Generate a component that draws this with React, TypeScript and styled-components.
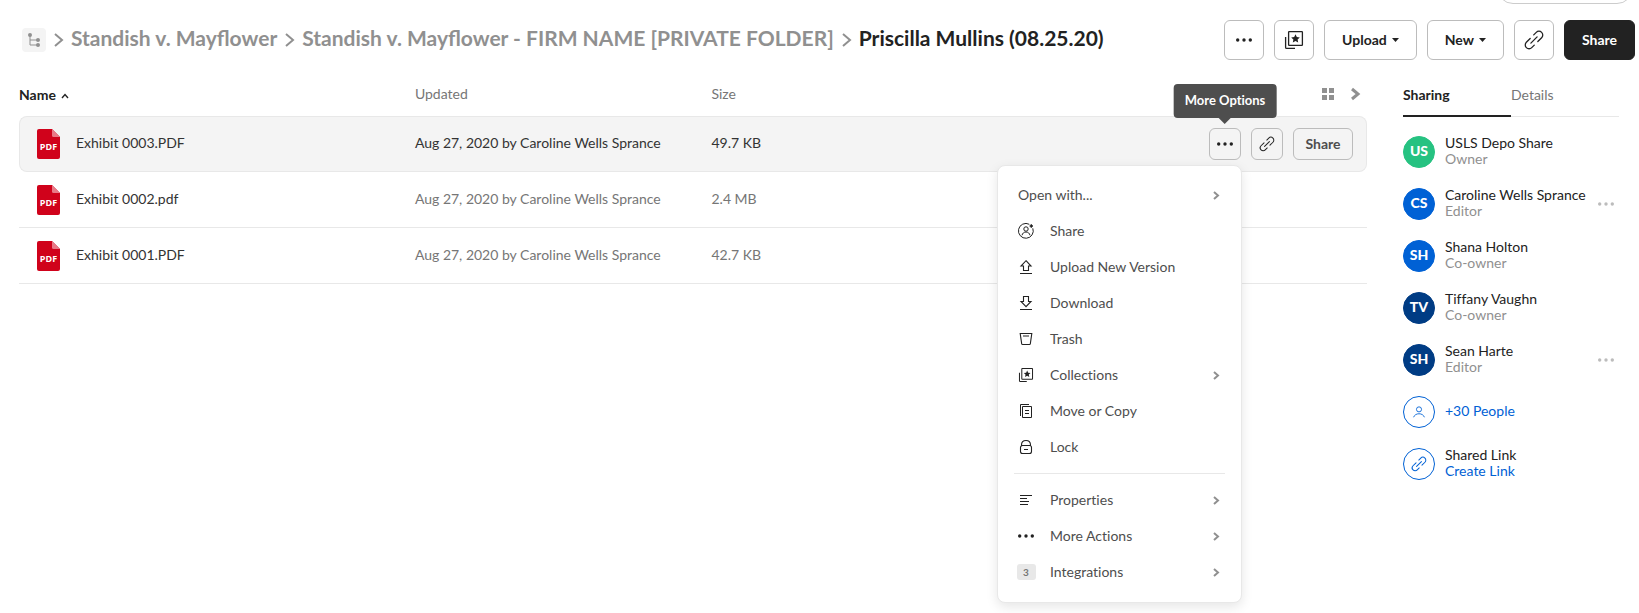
import React from 'react';
import styled, { createGlobalStyle, css } from 'styled-components';

const GlobalStyle = createGlobalStyle`
  * { box-sizing: border-box; }
  body { margin: 0; background: #fff; font-variant-ligatures: none; }
  body, button { font-family: Lato, "Liberation Sans", sans-serif; font-size: 14px; line-height: 20px; color: #222; }
  button { cursor: pointer; font-variant-ligatures: none; }
  svg { display: block; flex: none; overflow: visible; }
`;

/* ---------- icons ---------- */

const Svg = ({ size = 16, box = 16, children }: { size?: number; box?: number; children: React.ReactNode }) => (
  <svg width={size} height={size} viewBox={`0 0 ${box} ${box}`} fill="none" stroke="currentColor" aria-hidden="true">
    {children}
  </svg>
);

const DotsIcon = () => (
  <Svg>
    <g fill="currentColor" stroke="none">
      <circle cx="1.7" cy="8" r="1.7" />
      <circle cx="8" cy="8" r="1.7" />
      <circle cx="14.3" cy="8" r="1.7" />
    </g>
  </Svg>
);

const LinkIcon = ({ size = 18 }: { size?: number }) => (
  <Svg size={size} box={18}>
    <g transform="rotate(-45 9 9)" strokeWidth="1.3" strokeLinecap="round">
      <path d="M7.4 5.2H2a3.8 3.8 0 0 0 0 7.6h3.600M10.600 12.800H16a3.800 3.800 0 0 0 0-7.600h-3.600M4.600 9h8.800" />
    </g>
  </Svg>
);

const CollectionIcon = ({ size = 18 }: { size?: number }) => (
  <Svg size={size} box={18}>
    <rect x="3.600" y=".600" width="13.800" height="13.800" rx=".600" strokeWidth="1.300" />
    <path d="M.600 6v10.400c0 .600.400 1 1 1H10" strokeWidth="1.300" />
    <path d="M10.500 3.200l1.300 2.800 3 .400-2.200 2.100.600 3-2.700-1.500-2.700 1.500.600-3-2.200-2.100 3-.400z" fill="currentColor" stroke="none" />
  </Svg>
);

const TreeIcon = () => (
  <svg width="12" height="14" viewBox="0 0 12 14" fill="none" stroke="currentColor" aria-hidden="true">
    <path d="M2 2v10h8M2 7h8" />
    <g fill="currentColor" stroke="none">
      <circle cx="2" cy="2" r="2" />
      <circle cx="10" cy="7" r="2" />
      <circle cx="10" cy="12" r="2" />
    </g>
  </svg>
);

const Chevron = ({ w = 6, h = 9, stroke = 2 }: { w?: number; h?: number; stroke?: number }) => (
  <svg width={w} height={h} viewBox={`0 0 ${w} ${h}`} fill="none" stroke="currentColor" strokeWidth={stroke} aria-hidden="true">
    <path d={`M1 1L${w - 1} ${h / 2}L1 ${h - 1}`} />
  </svg>
);

const Caret = () => (
  <svg width="7" height="4" viewBox="0 0 7 4" fill="currentColor" aria-hidden="true"><path d="M0 0h7L3.5 4z" /></svg>
);

const SortIcon = () => (
  <svg width="8" height="6" viewBox="0 0 8 6" fill="none" stroke="currentColor" strokeWidth="1.4" aria-hidden="true">
    <path d="M1 6l3-3.400L7 6" />
  </svg>
);

const GridIcon = () => (
  <svg width="12" height="12" viewBox="0 0 12 12" fill="currentColor" aria-hidden="true">
    <path d="M0 0h5v5H0zM7 0h5v5H7zM0 7h5v5H0zM7 7h5v5H7z" />
  </svg>
);

const PdfIcon = () => (
  <svg width="23" height="30" viewBox="0 0 23 30" role="img" aria-label="PDF file">
    <path d="M2 0h13l8 8v20a2 2 0 0 1-2 2H2a2 2 0 0 1-2-2V2a2 2 0 0 1 2-2z" fill="#d0021b" />
    <path d="M15 0l8 8h-6.500A1.500 1.500 0 0 1 15 6.500z" fill="#e87a87" />
    <text x="11.500" y="21" textAnchor="middle" fill="#fff" fontFamily="Open Sans, sans-serif" fontWeight="700" fontSize="9">PDF</text>
  </svg>
);

const ShareIcon = () => (
  <Svg>
    <path d="M11.300 1.300A7.400 7.400 0 1 0 14.800 5.300" />
    <circle cx="8" cy="6" r="2.200" />
    <path d="M4 12.300c.400-2 2-3.300 4-3.300s3.600 1.300 4 3.300" />
    <path d="M13.300 1.300v3.400M11.600 3h3.400" strokeWidth="1.400" />
  </Svg>
);
const UploadIcon = () => (
  <Svg><path d="M8 1.700L13 7h-2.500v4.500h-5V7H3zM2 14.500h12" strokeWidth="1.100" /></Svg>
);
const DownloadIcon = () => (
  <Svg><path d="M8 11.700L3 6.500h2.500v-5h5v5H13zM2 14.500h12" strokeWidth="1.100" /></Svg>
);
const TrashIcon = () => (
  <Svg><path d="M2.200 2.500h11.600l-1.500 10.300c-.100.500-.400.700-.900.700H4.600c-.500 0-.800-.200-.900-.700zM5 5h6" strokeWidth="1.100" /></Svg>
);
const CopyIcon = () => (
  <Svg><path d="M4.500 3.500h9v11h-9zM2.500 13V1.500H11M7 7.500h4M7 10.500h4" /></Svg>
);
const LockIcon = () => (
  <Svg><path d="M4.500 6.500h7a2 2 0 0 1 2 2v4a2 2 0 0 1-2 2h-7a2 2 0 0 1-2-2v-4a2 2 0 0 1 2-2zM3.500 6.700V6C3.500 3.300 5.300 1.500 8 1.500S12.500 3.300 12.500 6v.700M6 10.500h4" strokeWidth="1.100" /></Svg>
);
const PropertiesIcon = () => (
  <Svg><path d="M2 3.500h12M2 6.500h7M2 9.500h9M2 12.500h8" strokeWidth="1.100" /></Svg>
);
const PersonIcon = () => (
  <Svg size={14}><circle cx="8" cy="5" r="2.900" /><path d="M1.800 14C2.800 11.400 5.100 10 8 10s5.200 1.400 6.200 4" /></Svg>
);

/* ---------- header ---------- */

const Page = styled.div`
  min-height: 100vh;
`;
const TopStrip = styled.div`
  display: flex;
  justify-content: flex-end;
  align-items: flex-end;
  height: 4px;
  padding-right: 6px;
  overflow: hidden;
`;
const AccountPill = styled.div`
  flex: none;
  width: 136px;
  height: 32px;
  border: 1px solid #ccc;
  border-radius: 16px;
`;
const Header = styled.header`
  display: flex;
  align-items: center;
  justify-content: space-between;
  padding: 16px 4px 16px 22px;
`;
const Breadcrumbs = styled.nav`
  display: flex;
  align-items: center;
  gap: 8px;
  color: #909090;
  white-space: nowrap;
`;
const RootButton = styled.button`
  display: grid;
  place-items: center;
  width: 24px;
  height: 24px;
  padding: 0;
  border: 0;
  border-radius: 4px;
  background: #f4f4f4;
  color: #909090;
`;
const Crumb = styled.a<{ $current?: boolean }>`
  padding-bottom: 4px;
  font-size: 21px;
  line-height: 24px;
  font-weight: 700;
  font-variant-ligatures: normal;
  text-decoration: none;
  color: ${p => (p.$current ? '#222' : '#909090')};
`;
const Actions = styled.div`
  display: flex;
  gap: 10px;
`;
const buttonBase = css`
  display: inline-flex;
  align-items: center;
  justify-content: center;
  gap: 5px;
  background: #fff;
  border: 1px solid #bcbcbc;
  font-weight: 700;
  white-space: nowrap;
`;
const ToolButton = styled.button<{ $primary?: boolean; $icon?: boolean }>`
  ${buttonBase}
  height: 40px;
  min-width: 40px;
  padding: 0 ${p => (p.$icon ? 0 : 17)}px;
  border-radius: 6px;
  ${p => p.$primary && css`background: #222; border-color: #222; color: #fff;`}
`;

/* ---------- body ---------- */

const Body = styled.div`
  display: flex;
  align-items: flex-start;
  gap: 36px;
  padding: 0 20px 0 19px;
`;
const Files = styled.main`
  flex: 1;
  min-width: 0;
`;
const Table = styled.table`
  width: 100%;
  table-layout: fixed;
  border-collapse: separate;
  border-spacing: 0;
`;
const HeadCell = styled.th<{ $sorted?: boolean; $width?: string }>`
  width: ${p => p.$width || 'auto'};
  height: 40px;
  padding: ${p => (p.$sorted ? '0 0 2px 0' : '0 0 4px 5px')};
  text-align: left;
  font-weight: ${p => (p.$sorted ? 700 : 400)};
  color: ${p => (p.$sorted ? '#222' : '#767676')};
`;
const SortButton = styled.button`
  display: flex;
  align-items: center;
  gap: 5px;
  padding: 0;
  border: 0;
  background: none;
  font-weight: 700;
`;
const ViewControls = styled.div`
  display: flex;
  justify-content: flex-end;
  align-items: center;
  gap: 17px;
  padding-right: 8px;
`;
const PlainButton = styled.button`
  display: flex;
  padding: 0;
  border: 0;
  background: none;
  color: #909090;
`;
const Cell = styled.td<{ $active?: boolean; $muted?: boolean }>`
  height: 56px;
  padding: 0 0 0 5px;
  white-space: nowrap;
  color: ${p => (p.$muted ? '#767676' : '#333')};
  border: 0 solid #e8e8e8;
  border-bottom-width: 1px;
  &:first-child { padding-left: 18px; }
  ${p => p.$active && css`
    background: #f4f4f4;
    border-top-width: 1px;
    &:first-child { border-left-width: 1px; padding-left: 17px; border-radius: 8px 0 0 8px; }
    &:last-child { border-right-width: 1px; border-radius: 0 8px 8px 0; }
  `}
`;
const CellText = styled.span`
  display: block;
  padding-bottom: 2px;
`;
const FileName = styled.div`
  display: flex;
  align-items: center;
  gap: 16px;
`;
const RowActions = styled.div`
  display: flex;
  justify-content: flex-end;
  gap: 10px;
  padding-right: 13px;
`;
const RowButton = styled.button<{ $text?: boolean }>`
  ${buttonBase}
  height: 32px;
  width: ${p => (p.$text ? 60 : 32)}px;
  padding: 0;
  border-radius: 6px;
  background: #f4f4f4;
  color: ${p => (p.$text ? '#4e4e4e' : '#222')};
`;
const MenuAnchor = styled.div`
  position: relative;
  display: flex;
`;
const Tooltip = styled.div`
  position: absolute;
  bottom: 42px;
  left: 50%;
  transform: translateX(-50%);
  padding: 6px 11px 8px;
  border-radius: 4px;
  background: #4e4e4e;
  color: #fff;
  font-size: 13px;
  font-weight: 700;
  white-space: nowrap;
  &::after {
    content: '';
    position: absolute;
    top: 100%;
    left: 50%;
    margin-left: -6px;
    border: 6px solid transparent;
    border-bottom: 0;
    border-top-color: #4e4e4e;
  }
`;
const Menu = styled.div`
  position: absolute;
  z-index: 2;
  top: 37px;
  right: -1px;
  width: 245px;
  padding: 11px 16px 12px;
  border: 1px solid #e8e8e8;
  border-radius: 8px;
  background: #fff;
  box-shadow: 0 4px 12px rgba(0, 0, 0, 0.1);
`;
const MenuItem = styled.button`
  display: flex;
  align-items: center;
  width: 100%;
  height: 36px;
  padding: 0 6px 0 4px;
  border: 0;
  background: none;
  text-align: left;
  color: #4e4e4e;
`;
const MenuIcon = styled.span`
  display: flex;
  justify-content: center;
  width: 16px;
  margin-right: 16px;
  color: #222;
`;
const MenuLabel = styled.span`
  flex: 1;
`;
const MenuArrow = styled.span`
  color: #909090;
`;
const MenuDivider = styled.hr`
  height: 1px;
  margin: 8px 0;
  border: 0;
  background: #e8e8e8;
`;
const CountBadge = styled.span`
  flex: none;
  width: 19px;
  border-radius: 3px;
  background: #e8e8e8;
  color: #767676;
  font-size: 10px;
  line-height: 16px;
  font-weight: 700;
  text-align: center;
`;

/* ---------- sidebar ---------- */

const Sidebar = styled.aside`
  flex: none;
  width: 216px;
`;
const Tabs = styled.div`
  display: flex;
  height: 41px;
  margin-bottom: 19px;
  border-bottom: 1px solid #e8e8e8;
`;
const Tab = styled.button<{ $active?: boolean }>`
  flex: 1;
  height: 41px;
  padding: 0 0 2px;
  border: 0;
  border-bottom: 2px solid ${p => (p.$active ? '#222' : 'transparent')};
  background: none;
  text-align: left;
  font-weight: ${p => (p.$active ? 700 : 400)};
  color: ${p => (p.$active ? '#222' : '#767676')};
`;
const People = styled.ul`
  display: grid;
  gap: 20px;
  margin: 0;
  padding: 0;
  list-style: none;
`;
const Person = styled.li`
  display: flex;
  align-items: center;
  height: 32px;
`;
const Avatar = styled.span<{ $color?: string }>`
  flex: none;
  display: grid;
  place-items: center;
  width: 32px;
  height: 32px;
  margin-right: 10px;
  padding-bottom: ${p => (p.$color ? 2 : 0)}px;
  border-radius: 50%;
  border: 1px solid ${p => p.$color || '#0061d5'};
  background: ${p => p.$color || '#fff'};
  color: ${p => (p.$color ? '#fff' : '#0061d5')};
  font-weight: 900;
`;
const PersonText = styled.div`
  flex: 1;
  line-height: 16px;
  padding-bottom: 2px;
  white-space: nowrap;
`;
const Role = styled.div`
  color: #909090;
`;
const TextLink = styled.a`
  display: block;
  color: #0061d5;
  text-decoration: none;
`;
const PersonMenu = styled(PlainButton)`
  margin-right: 5px;
  color: #bcbcbc;
`;

/* ---------- data ---------- */

const files = [
  { name: 'Exhibit 0003.PDF', size: '49.7 KB', active: true },
  { name: 'Exhibit 0002.pdf', size: '2.4 MB' },
  { name: 'Exhibit 0001.PDF', size: '42.7 KB' },
];
const menuTop = [
  { label: 'Share', icon: <ShareIcon /> },
  { label: 'Upload New Version', icon: <UploadIcon /> },
  { label: 'Download', icon: <DownloadIcon /> },
  { label: 'Trash', icon: <TrashIcon /> },
  { label: 'Collections', icon: <CollectionIcon size={14} />, arrow: true },
  { label: 'Move or Copy', icon: <CopyIcon /> },
  { label: 'Lock', icon: <LockIcon /> },
];
const menuBottom = [
  { label: 'Properties', icon: <PropertiesIcon />, arrow: true },
  { label: 'More Actions', icon: <DotsIcon />, arrow: true },
  { label: 'Integrations', icon: <CountBadge>3</CountBadge>, arrow: true },
];
const people = [
  { initials: 'US', name: 'USLS Depo Share', role: 'Owner', color: '#26c281' },
  { initials: 'CS', name: 'Caroline Wells Sprance', role: 'Editor', color: '#0061d5', menu: true },
  { initials: 'SH', name: 'Shana Holton', role: 'Co-owner', color: '#0061d5' },
  { initials: 'TV', name: 'Tiffany Vaughn', role: 'Co-owner', color: '#003c84' },
  { initials: 'SH', name: 'Sean Harte', role: 'Editor', color: '#003c84', menu: true },
];

const Item = ({ label, icon, arrow }: { label: string; icon?: React.ReactNode; arrow?: boolean }) => (
  <MenuItem role="menuitem">
    {icon && <MenuIcon>{icon}</MenuIcon>}
    <MenuLabel>{label}</MenuLabel>
    {arrow && <MenuArrow><Chevron /></MenuArrow>}
  </MenuItem>
);

const OptionsMenu = () => (
  <Menu role="menu">
    <Item label="Open with..." arrow />
    {menuTop.map(i => <Item key={i.label} {...i} />)}
    <MenuDivider />
    {menuBottom.map(i => <Item key={i.label} {...i} />)}
  </Menu>
);

export default function App() {
  return (
    <Page>
      <GlobalStyle />
      <TopStrip><AccountPill /></TopStrip>
      <Header>
        <Breadcrumbs aria-label="Breadcrumb">
          <RootButton aria-label="All folders"><TreeIcon /></RootButton>
          <Chevron w={9} h={14} />
          <Crumb href="#">Standish v. Mayflower</Crumb>
          <Chevron w={9} h={14} />
          <Crumb href="#">Standish v. Mayflower - FIRM NAME [PRIVATE FOLDER]</Crumb>
          <Chevron w={9} h={14} />
          <Crumb href="#" $current aria-current="page">Priscilla Mullins (08.25.20)</Crumb>
        </Breadcrumbs>
        <Actions>
          <ToolButton $icon aria-label="More options"><DotsIcon /></ToolButton>
          <ToolButton $icon aria-label="Add to collection"><CollectionIcon /></ToolButton>
          <ToolButton>Upload <Caret /></ToolButton>
          <ToolButton>New <Caret /></ToolButton>
          <ToolButton $icon aria-label="Copy link"><LinkIcon /></ToolButton>
          <ToolButton $primary>Share</ToolButton>
        </Actions>
      </Header>
      <Body>
        <Files>
          <Table>
            <thead>
              <tr>
                <HeadCell $sorted $width="29%" aria-sort="ascending"><SortButton>Name <SortIcon /></SortButton></HeadCell>
                <HeadCell $width="22%">Updated</HeadCell>
                <HeadCell $width="22%">Size</HeadCell>
                <HeadCell>
                  <ViewControls>
                    <PlainButton aria-label="Grid view"><GridIcon /></PlainButton>
                    <PlainButton aria-label="Collapse sidebar"><Chevron w={8} h={12} stroke={3} /></PlainButton>
                  </ViewControls>
                </HeadCell>
              </tr>
            </thead>
            <tbody>
              {files.map(f => (
                <tr key={f.name}>
                  <Cell $active={f.active}><FileName><PdfIcon /><CellText>{f.name}</CellText></FileName></Cell>
                  <Cell $active={f.active} $muted={!f.active}><CellText>Aug 27, 2020 by Caroline Wells Sprance</CellText></Cell>
                  <Cell $active={f.active} $muted={!f.active}><CellText>{f.size}</CellText></Cell>
                  <Cell $active={f.active}>
                    {f.active && (
                      <RowActions>
                        <MenuAnchor>
                          <Tooltip role="tooltip">More Options</Tooltip>
                          <RowButton aria-label="More options" aria-haspopup="menu" aria-expanded><DotsIcon /></RowButton>
                          <OptionsMenu />
                        </MenuAnchor>
                        <RowButton aria-label="Copy link"><LinkIcon size={14} /></RowButton>
                        <RowButton $text>Share</RowButton>
                      </RowActions>
                    )}
                  </Cell>
                </tr>
              ))}
            </tbody>
          </Table>
        </Files>
        <Sidebar>
          <Tabs role="tablist">
            <Tab role="tab" aria-selected $active>Sharing</Tab>
            <Tab role="tab" aria-selected={false}>Details</Tab>
          </Tabs>
          <People>
            {people.map(p => (
              <Person key={p.name}>
                <Avatar $color={p.color}>{p.initials}</Avatar>
                <PersonText>{p.name}<Role>{p.role}</Role></PersonText>
                {p.menu && <PersonMenu aria-label={`Options for ${p.name}`}><DotsIcon /></PersonMenu>}
              </Person>
            ))}
            <Person>
              <Avatar><PersonIcon /></Avatar>
              <PersonText><TextLink href="#">+30 People</TextLink></PersonText>
            </Person>
            <Person>
              <Avatar><LinkIcon size={14} /></Avatar>
              <PersonText>Shared Link<TextLink href="#">Create Link</TextLink></PersonText>
            </Person>
          </People>
        </Sidebar>
      </Body>
    </Page>
  );
}
